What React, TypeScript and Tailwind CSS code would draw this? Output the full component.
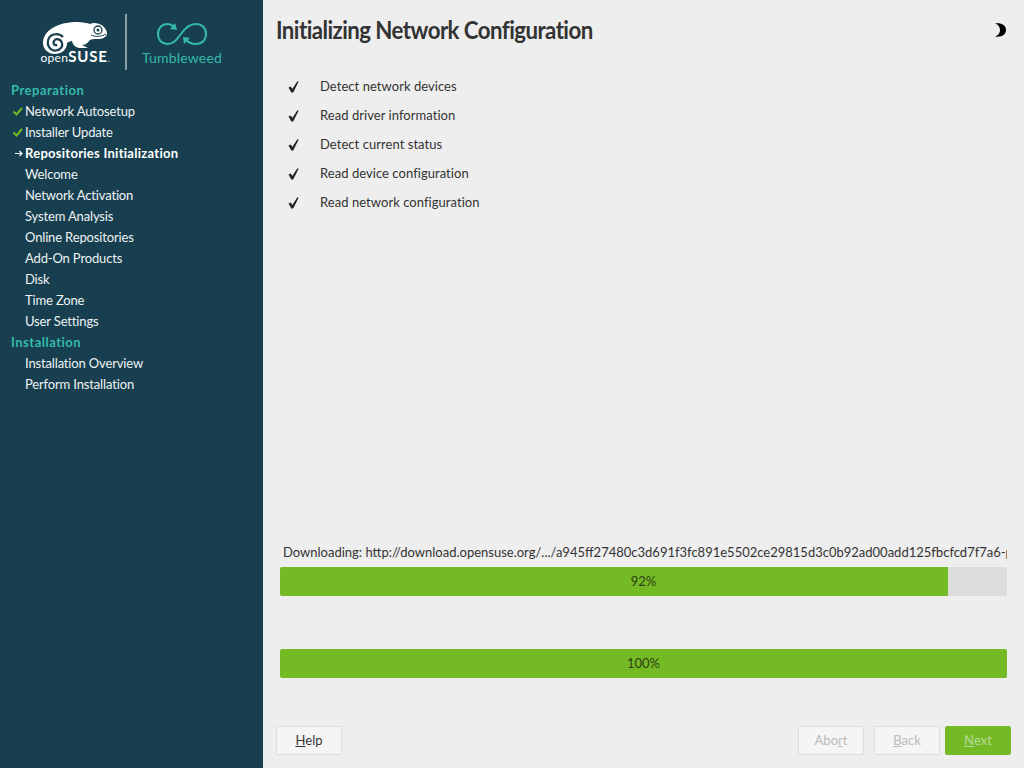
const font = { fontFamily: '"Lato", "Noto Sans", sans-serif' };

interface Step {
  label: string;
  state?: "done" | "current";
  heading?: boolean;
}

const steps: Step[] = [
  { label: "Preparation", heading: true },
  { label: "Network Autosetup", state: "done" },
  { label: "Installer Update", state: "done" },
  { label: "Repositories Initialization", state: "current" },
  { label: "Welcome" },
  { label: "Network Activation" },
  { label: "System Analysis" },
  { label: "Online Repositories" },
  { label: "Add-On Products" },
  { label: "Disk" },
  { label: "Time Zone" },
  { label: "User Settings" },
  { label: "Installation", heading: true },
  { label: "Installation Overview" },
  { label: "Perform Installation" },
];

const tasks = [
  "Detect network devices",
  "Read driver information",
  "Detect current status",
  "Read device configuration",
  "Read network configuration",
];

const Logo = () => (
  <div className="flex h-[80px] shrink-0 items-start">
    <div className="ml-[41px] mt-[21px] flex w-[68px] flex-col items-center">
      <svg width="68" height="34" viewBox="0 0 68 34" fill="#fff">
        <path d="M2 22 C2 10 16 1 36 1 C42 1 46 2 49 3 C52 1 58 2 62 5 C64 7 66 10 66 12 C66 16 62 18 56 18 C53 18 50 18 49 19 C47 22 44 24 41 24 L47 27 L38 27 C34 26 32 24 31 20 C29 20 27 21 26 22 C26 29 20 33 14 33 C7 33 2 28 2 22 Z" />
        <path d="M22 16 C18 12 10 12 7.500 18 C5 25 10 30 15 29.500 C20 29 22 25 21 22 C20 18 15 17 13 20 C11.500 23 14 25 16 23.500" fill="none" stroke="#173f4f" strokeWidth="2.200" />
        <circle cx="57" cy="9" r="4" fill="none" stroke="#173f4f" strokeWidth="1.300" />
        <circle cx="57" cy="9" r="1.500" fill="#173f4f" />
        <path d="M50 14 C54 16 60 16 65 13" fill="none" stroke="#173f4f" strokeWidth="1" />
      </svg>
      <div className="mt-[-5px] flex items-baseline whitespace-nowrap leading-[12px] text-white">
        <span className="text-[12px] tracking-[0.3px]">open</span>
        <span className="text-[15px] font-bold tracking-[0.8px]">SUSE</span>
        <span className="text-[8px]">.</span>
      </div>
    </div>
    <div className="ml-[16px] mt-[14px] h-[56px] w-[2px] bg-[#8a9fa8]" />
    <div className="ml-[15px] mt-[22px] flex w-[80px] flex-col items-center">
      <svg width="50" height="24" viewBox="0 0 50 24" fill="none" stroke="#35b9ab" strokeWidth="2">
        <path d="M17 5 C15 3 13 2 11 2 C5 2 1 6 1 12 C1 18 5 22 11 22 C17 22 20 17 24 12 C28 6 33 2 39 2 C45 2 49 6 49 12 C49 18 45 22 39 22 C35 22 31 20 29 18" />
        <path d="M20 8 L13 7 L18 1 Z" fill="#35b9ab" stroke="none" />
        <path d="M26 15 L33 16 L27 22 Z" fill="#35b9ab" stroke="none" />
      </svg>
      <span className="mt-[2px] whitespace-nowrap text-[14px] leading-[20px] tracking-[0.2px] text-[#35b9ab]">
        Tumbleweed
      </span>
    </div>
  </div>
);

const Sidebar = () => (
  <aside className="flex h-full w-[263px] shrink-0 flex-col bg-[#173f4f]">
    <Logo />
    <ul className="flex flex-col">
      {steps.map((step) =>
        step.heading ? (
          <li key={step.label} className="flex h-[21px] items-center pl-[11px] text-[13px] font-bold tracking-[0.5px] text-[#35b9ab]">
            {step.label}
          </li>
        ) : (
          <li key={step.label} className="relative flex h-[21px] items-center pl-[25px] text-[13px] text-[#eef2f3]">
            {step.state === "done" && (
              <svg width="10" height="9" viewBox="0 0 10 9" fill="none" stroke="#73ba25" strokeWidth="2" className="absolute left-[13px] top-[6px]">
                <path d="M0.500 4.500 L3.500 7.500 L9 1" />
              </svg>
            )}
            {step.state === "current" && (
              <svg width="8" height="7" viewBox="0 0 8 7" fill="none" stroke="#fff" strokeWidth="1.200" className="absolute left-[15px] top-[7px]">
                <path d="M0 3.500 H7 M4.500 1 L7 3.500 L4.500 6" />
              </svg>
            )}
            <span className={step.state === "current" ? "font-bold tracking-[0.27px] text-white" : "tracking-[-0.15px]"}>{step.label}</span>
          </li>
        )
      )}
    </ul>
  </aside>
);

const Bar = ({ value }: { value: number }) => (
  <div className="relative h-[29px] w-[727px] overflow-hidden rounded-[2px] bg-[#dcdcdc]">
    <div className="h-full bg-[#73ba25]" style={{ width: Math.floor((727 * value) / 100) }} />
    <div className="absolute inset-0 flex items-center justify-center text-[13px] text-[#2f3f14]">{value}%</div>
  </div>
);

const Button = ({ hot, rest, pre = "", primary, disabled, className = "" }: { hot: string; rest: string; pre?: string; primary?: boolean; disabled?: boolean; className?: string }) => (
  <div
    className={`flex h-[29px] w-[66px] items-center justify-center rounded-[2px] border text-[13px] ${
      primary
        ? "border-[#73ba25] bg-[#73ba25] text-[#b9d79a]"
        : disabled
          ? "border-[#dddddd] bg-[#f5f5f5] text-[#bbbbbb]"
          : "border-[#dddddd] bg-[#f5f5f5] text-[#333333]"
    } ${className}`}
  >
    {pre}
    <span className="underline">{hot}</span>
    {rest}
  </div>
);

export default function App() {
  return (
    <div className="flex h-[768px] w-[1024px] overflow-hidden bg-[#eeeeee]" style={font}>
      <Sidebar />
      <main className="flex min-w-0 flex-1 flex-col">
        <div className="flex h-[60px] shrink-0 items-center justify-between pl-[13px] pr-[18px]">
          <h1 className="origin-left scale-x-[0.927] whitespace-nowrap text-[24px] font-bold tracking-[-0.6px] text-[#333333]">
            Initializing Network Configuration
          </h1>
          <svg width="11" height="14" viewBox="0 0 11 14" fill="#000">
            <path d="M0 0.500 C6 -0.500 11 2 11 7 C11 12 6 14.500 0 13.500 C4 12 5 9.500 5 7 C5 4.500 4 2 0 0.500 Z" />
          </svg>
        </div>
        <ul className="mt-[12px] flex flex-col pl-[25px]">
          {tasks.map((task) => (
            <li key={task} className="flex h-[29px] items-center text-[13px] text-[#333333]">
              <svg width="11" height="12" viewBox="0 0 11 12" fill="#222222" className="mt-[1px]">
                <path d="M0.500 6.500 L2.800 5.500 L4.300 8 L9.200 0.500 L10.700 0.500 L5.200 11.500 L3.300 11.500 Z" />
              </svg>
              <span className="ml-[21px] tracking-[0.05px]">{task}</span>
            </li>
          ))}
        </ul>
        <div className="mt-[324px] flex flex-col pl-[17px]">
          <div className="h-[22px] w-[727px] overflow-hidden whitespace-nowrap pl-[3px] text-[13px] leading-[22px] text-[#333333]">
            Downloading: http://download.opensuse.org/.../a945ff27480c3d691f3fc891e5502ce29815d3c0b92ad00add125fbcfcd7f7a6-primary.xml.gz
          </div>
          <div className="mt-[4px]">
            <Bar value={92} />
          </div>
          <div className="mt-[53px]">
            <Bar value={100} />
          </div>
        </div>
        <div className="mt-[48px] flex pl-[13px]">
          <Button hot="H" rest="elp" />
          <div className="ml-[456px] flex">
            <Button pre="Abo" hot="r" rest="t" disabled />
            <Button hot="B" rest="ack" disabled className="ml-[10px]" />
            <Button hot="N" rest="ext" primary className="ml-[5px]" />
          </div>
        </div>
      </main>
    </div>
  );
}
